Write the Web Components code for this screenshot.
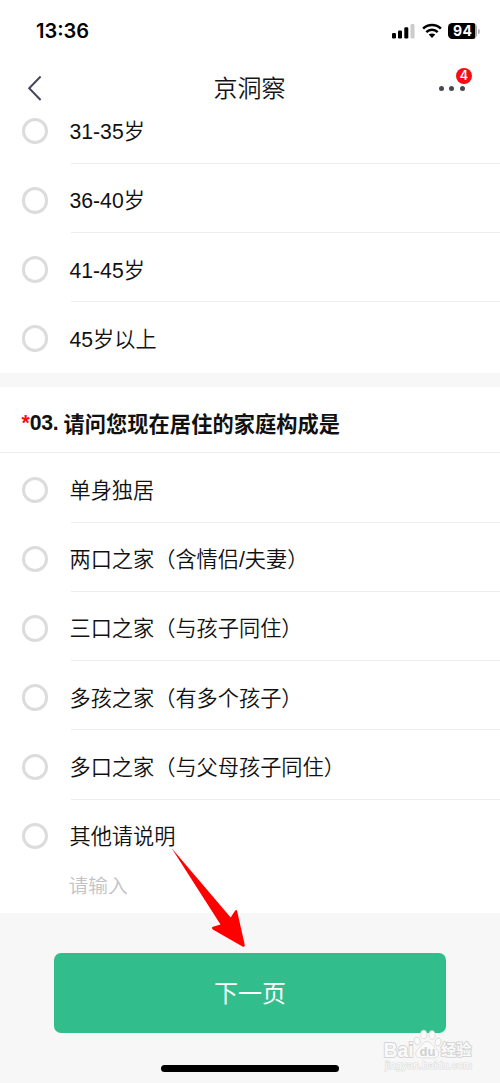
<!DOCTYPE html>
<html lang="zh-CN">
<head>
<meta charset="utf-8">
<title>京洞察</title>
<style>
html,body{margin:0;padding:0;background:#f7f7f7}
body{width:500px;height:1083px;overflow:hidden;font-family:"Liberation Sans","Noto Sans CJK SC",sans-serif;color:#111}
</style>
</head>
<body>
<survey-app></survey-app>
<script>
const define = (name, html) => customElements.define(name, class extends HTMLElement {
  constructor() {
    super();
    const t = document.createElement('template');
    t.innerHTML = html;
    this.attachShadow({mode: 'open'}).appendChild(t.content.cloneNode(true));
  }
});

define('status-bar', `
<style>
:host{display:flex;height:62px;box-sizing:border-box;padding:0 20px 0 36px;align-items:center;justify-content:space-between;background:#fff;color:#000}
.time{font:600 20px/24px Inter,sans-serif;letter-spacing:0}
.icons{display:flex;align-items:center}
.wifi{margin-left:6.5px}
.bat{display:flex;align-items:center;margin-left:6.5px}
.lvl{width:29px;height:16px;border-radius:4.5px;background:linear-gradient(90deg,#000 94%,#aaa 94%);color:#fff;font:700 14px/16px Inter,sans-serif;text-align:center;letter-spacing:.3px}
.tip{width:1.6px;height:5px;background:#bbb;border-radius:0 2px 2px 0;margin-left:1.3px}
svg{display:block}
</style>
<span class="time">13:36</span>
<div class="icons">
<svg width="23" height="16" viewBox="0 0 23 16"><rect y="10" width="4" height="5.5" rx="1.2"/><rect x="6" y="7.5" width="4" height="8" rx="1.2"/><rect x="12.3" y="4.3" width="4" height="11.2" rx="1.2"/><rect x="18.5" y="1" width="4" height="14.5" rx="1.2" fill="#ccc"/></svg>
<svg class="wifi" width="20" height="16" viewBox="0 0 20 16"><g fill="none" stroke="#000" stroke-width="2.6"><path d="M1.1 5.6C6 .8 14 .8 18.9 5.6"/><path d="M4.3 9.1C7.6 6 12.4 6 15.7 9.1"/></g><path d="M6.7 11.6c2-1.6 4.6-1.6 6.6 0L10 15z"/></svg>
<div class="bat"><div class="lvl">94</div><div class="tip"></div></div>
</div>`);

define('nav-bar', `
<style>
:host{display:grid;grid-template-columns:80px 1fr 80px;height:52px;align-items:center;background:#fff}
.back{margin-left:26px;display:block}
h1{margin:0 1px 0 0;padding-top:1px;text-align:center;font-weight:350;font-size:24px;line-height:36px;color:#151515}
.more{position:relative;width:28px;height:26px;display:flex;align-items:center;gap:5.8px;margin-left:18.5px}
i{width:5px;height:5px;border-radius:50%;background:#454852}
b{position:absolute;left:17.3px;top:-7px;width:16.4px;height:16.4px;border-radius:50%;background:#fb0a14;color:#fff;font:600 12.5px/16.5px Inter,sans-serif;text-align:center}
</style>
<svg class="back" width="18" height="26" viewBox="0 0 18 26"><path d="M14.6 1.5 3.2 13.2 14.6 25" fill="none" stroke="#44485a" stroke-width="2"/></svg>
<h1><slot></slot></h1>
<div class="more"><i></i><i></i><i></i><b>4</b></div>`);

define('radio-option', `
<style>
:host{display:flex;height:69.25px;box-sizing:border-box;padding:4px 0 0 21.6px;gap:21.3px;font-size:21.2px;font-weight:350;align-items:center;background:linear-gradient(#ededed,#ededed) 71px 100%/429px 1px no-repeat #fff}
:host([last]){height:71px;padding-top:2px;background:#fff}
.ring{box-sizing:border-box;width:26.6px;height:26.6px;border:3px solid #dcdcdc;border-radius:50%;flex:none}
.label{line-height:32px;white-space:nowrap;padding-top:2px}
</style>
<span class="ring"></span><span class="label"><slot></slot></span>`);

define('question-title', `
<style>
:host{display:flex;height:66px;box-sizing:border-box;padding:7px 0 0 21.5px;align-items:center;font-weight:700;font-size:21.2px;background:#fff;border-bottom:1px solid #ededed;white-space:pre;letter-spacing:.1px}
em{font-style:normal;color:#fb0a14;font-weight:700}
.n{letter-spacing:-.4px;margin-right:5.3px;padding-top:1px}
</style>
<em>*</em><span class="n">03.</span><slot></slot>`);

define('text-entry', `
<style>
:host{display:flex;height:42.5px;box-sizing:border-box;padding:0 0 0 68.5px;background:#fff;color:#c3c3c7;font-size:19.8px;font-weight:350;line-height:30px}
</style><slot></slot>`);

define('next-button', `
<style>
:host{display:flex;justify-content:center;margin:40px 54px 0}
button{width:100%;height:80px;border:0;border-radius:7px;background:#31be8c;color:#fff;font:400 24px/36px "Noto Sans CJK SC",sans-serif;padding:0 0 2.5px}
</style><button><slot></slot></button>`);

define('red-arrow', `
<style>:host{position:absolute;left:168px;top:844px;z-index:3}svg{display:block}</style>
<svg width="80" height="106" viewBox="0 0 80 106"><path d="M3.5 4L62.7 73.5L67.2 66.5Q69 65 69.2 67.5L76.7 100.5Q77.2 103.5 74.5 102.5L44.8 85.5Q43 83.5 45 82.8L52.5 80.5Z" fill="#f00"/></svg>`);

define('water-mark', `
<style>
:host{position:absolute;left:380.5px;top:1028px;width:96px;height:46px;z-index:3}
svg{display:block}
text{paint-order:stroke;stroke:#d4d4d4;stroke-width:2px;stroke-linejoin:round;fill:#fafafa}
</style>
<svg width="96" height="46" viewBox="0 0 96 46">
<g fill="#fafafa" stroke="#d8d8d8" stroke-width=".8"><ellipse cx="42.7" cy="6.5" rx="3.1" ry="4.3"/><ellipse cx="51" cy="7" rx="3.1" ry="4.3"/><ellipse cx="36.3" cy="13" rx="3" ry="4.1" transform="rotate(-15 36.3 13)"/><ellipse cx="57" cy="14" rx="3" ry="4.1" transform="rotate(15 57 14)"/><path d="M46 13.5c3.5 0 4.5 3 7 5.2 3.2 2.5 5 4.3 4.7 7.2-.5 4.7-5 4-11.7 4s-11 .5-11.3-4c-.2-2.8 1.8-4.5 4.5-7 2.4-2.2 3.3-5.4 6.8-5.4z"/></g>
<text x="2.5" y="28.5" font-family="Liberation Sans" font-weight="700" font-size="21" textLength="30" lengthAdjust="spacingAndGlyphs">Bai</text>
<text x="38.5" y="27.5" font-family="Liberation Sans" font-weight="700" font-size="13" style="fill:#d0d0d0;stroke:none">du</text>
<text x="60" y="27" font-family="Noto Sans CJK SC" font-weight="700" font-size="15.2">经验</text>
<text x="4" y="41" font-family="Liberation Sans" font-size="10.8" textLength="87" lengthAdjust="spacingAndGlyphs" style="stroke-width:1.2px;stroke:#dedede">jingyan.baidu.com</text>
</svg>`);

define('survey-app', `
<style>
:host{display:flex;flex-direction:column;position:relative;width:500px;height:1083px;overflow:hidden;background:#f7f7f7}
header{position:relative;z-index:2;flex:none}
.list{display:flex;flex-direction:column;flex:none}
.ages{margin-top:-19.5px}
.family{margin-top:13.5px}
question-title{box-shadow:0 .5px #fff;margin-bottom:.5px}
.family{background:#fff}
.home{width:178.5px;height:7px;border-radius:4px;background:#000;margin:31.5px auto 0 160.8px;flex:none}
</style>
<header><status-bar></status-bar><nav-bar>京洞察</nav-bar></header>
<div class="list ages">
<radio-option>31-35岁</radio-option>
<radio-option>36-40岁</radio-option>
<radio-option>41-45岁</radio-option>
<radio-option last>45岁以上</radio-option>
</div>
<div class="list family">
<question-title>请问您现在居住的家庭构成是</question-title>
<radio-option>单身独居</radio-option>
<radio-option>两口之家（含情侣/夫妻）</radio-option>
<radio-option>三口之家（与孩子同住）</radio-option>
<radio-option>多孩之家（有多个孩子）</radio-option>
<radio-option>多口之家（与父母孩子同住）</radio-option>
<radio-option last>其他请说明</radio-option>
<text-entry>请输入</text-entry>
</div>
<next-button>下一页</next-button>
<div class="home"></div>
<red-arrow></red-arrow>
<water-mark></water-mark>`);
</script>
</body>
</html>
